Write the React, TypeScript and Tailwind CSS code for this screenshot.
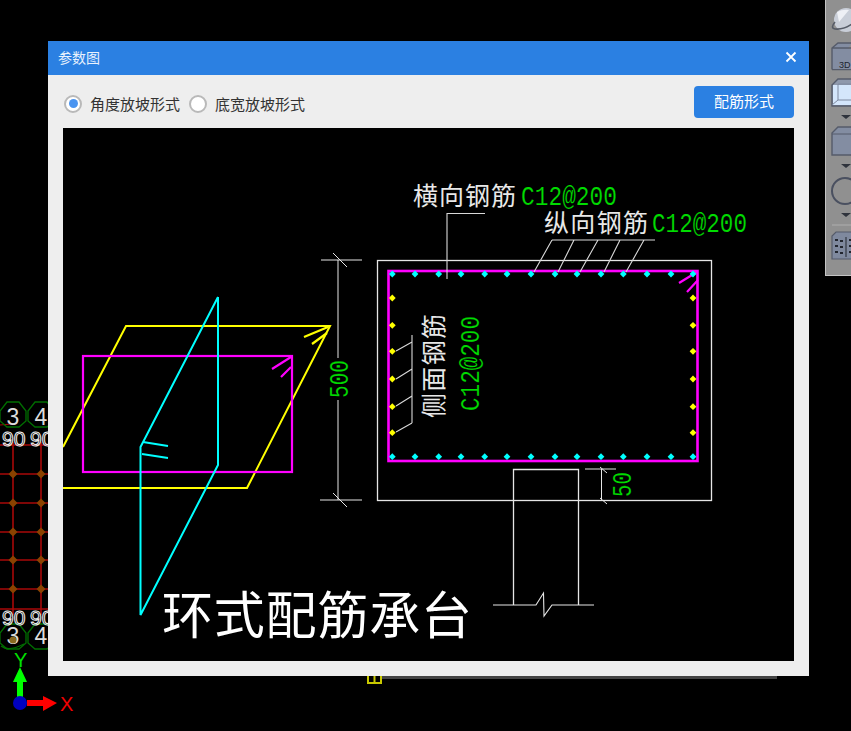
const cjk = "font-['Noto_Sans_CJK_SC','Noto_Sans',sans-serif]";
const mono = "font-['Liberation_Mono','DejaVu_Sans_Mono',monospace]";
const sans = "font-['Liberation_Sans',sans-serif]";

const dotX = [392.3, 415, 438.7, 461, 484.7, 507, 531, 555, 577, 601, 623.3, 647, 671, 693];
const dotY = [298, 325.3, 351.3, 379, 406.7, 432.7];

function Diamond({ x, y, color, r = 3.4 }: { x: number; y: number; color: string; r?: number }) {
  return <polygon points={`${x},${y - r} ${x + r},${y} ${x},${y + r} ${x - r},${y}`} fill={color} />;
}

// the thin green cad labels, squeezed into the width they have in the picture
function Green({ transform, x, y, length, children }: { transform?: string; x?: number; y?: number; length: number; children: string }) {
  return (
    <text
      transform={transform}
      x={x}
      y={y}
      fontSize="27"
      textLength={length}
      lengthAdjust="spacingAndGlyphs"
      fill="#00dc00"
      stroke="#000"
      strokeWidth="0.2"
      className={mono}
    >
      {children}
    </text>
  );
}

function Drawing() {
  return (
    <svg width={731} height={533} viewBox="63 128 731 533" className="block bg-black">
      {/* left: sloped 3d view */}
      <g fill="none" stroke="#ffff00" strokeWidth="2">
        <polyline points="63,447 126,326 330,326 247,488 63,488" />
        <path d="M328,327 L304,337 M327,333 L312,344" strokeWidth="2.2" />
      </g>
      <g fill="none" stroke="#ff00ff" strokeWidth="2.2">
        <rect x="83" y="356" width="209" height="116" />
        <path d="M291,357 L272,369 M291,367 L281,377" />
      </g>
      <g fill="none" stroke="#00ffff" strokeWidth="2">
        <polyline points="218,297 218,465 140.5,615 140.5,447 218,297" />
        <path d="M143,442 L168,446 M142,454 L168,458" strokeWidth="2" />
      </g>

      {/* dimension 500 */}
      <g fill="none" stroke="#e6e6e6" strokeWidth="1">
        <path d="M338,260 V358 M338,400 V500 M321,260 H362 M320,500 H362 M333,253 L347,267 M333,493 L347,507" />
      </g>
      <Green transform="translate(348,398) rotate(-90)" length={38}>500</Green>

      {/* section */}
      <rect x="377.5" y="260.5" width="334" height="240" fill="none" stroke="#e6e6e6" strokeWidth="1.3" />
      <rect x="388.5" y="271" width="309" height="190" fill="none" stroke="#ff00ff" strokeWidth="2.6" />
      <path d="M697,272 L679,283 M698,280 L687,292" stroke="#ff00ff" strokeWidth="2.2" fill="none" />
      {dotX.map((x) => <Diamond key={x} x={x} y={274} color="#00ffff" />)}
      {dotX.map((x) => <Diamond key={x} x={x} y={456.7} color="#00ffff" />)}
      {dotY.map((y) => <Diamond key={y} x={392.3} y={y} color="#ffff00" />)}
      {dotY.map((y) => <Diamond key={y} x={693} y={y} color="#ffff00" />)}

      {/* leaders */}
      <g fill="none" stroke="#d9d9d9" strokeWidth="1.1">
        <polyline points="485,213.5 447,213.5 447,279" />
        <path d="M552,240 H655 M552,240 L534,272 M574,240 L558,272 M598,240 L580,272 M620,240 L604,272 M644,240 L626,272" />
        <path d="M412,335 V423 M412,342 L396,351 M412,369 L396,379 M412,396 L396,406 M412,423 L396,432" />
      </g>

      {/* column + break line */}
      <g fill="none" stroke="#e6e6e6" strokeWidth="1.3">
        <polyline points="513.5,605 513.5,469.5 578.5,469.5 578.5,605" />
        <polyline points="493,605 536,605 543.5,593 544,616 552,605 594,605" strokeWidth="1.1" />
        <path d="M585,469 H616 M601.5,469 V500 M600,467 L607,473 M600,498 L607,504" strokeWidth="1" />
      </g>
      <Green transform="translate(631,497) rotate(-90)" length={25}>50</Green>

      <text x="413" y="205" fontSize="25" textLength="103" fill="#e8e8e8" className={cjk}>横向钢筋</text>
      <Green x={521} y={205} length={96}>C12@200</Green>
      <text x="544" y="232" fontSize="25" textLength="104" fill="#e8e8e8" className={cjk}>纵向钢筋</text>
      <Green x={652} y={232} length={95}>C12@200</Green>
      <text transform="translate(443,418) rotate(-90)" fontSize="25" textLength="104" fill="#e8e8e8" className={cjk}>侧面钢筋</text>
      <Green transform="translate(479,411) rotate(-90)" length={95}>C12@200</Green>
      <text x="162" y="634" fontSize="51" textLength="310" fill="#ffffff" className={cjk}>环式配筋承台</text>
    </svg>
  );
}

function Radio({ checked, label }: { checked?: boolean; label: string }) {
  return (
    <label className="flex items-center gap-[8px]">
      <span className="flex h-[18px] w-[18px] items-center justify-center rounded-full border-2 border-[#b9b9b9] bg-white">
        {checked && <span className="h-[9px] w-[9px] rounded-full bg-[#4a94f0]" />}
      </span>
      <span className="text-[15px] leading-none text-[#333333]">{label}</span>
    </label>
  );
}

// what is left of the cad window behind the dialog
function Backdrop() {
  const rows = [474, 503, 532, 560, 589];
  const cols = [13, 41];
  return (
    <svg width={851} height={731} className="absolute left-0 top-0">
      <g stroke="#a80808" strokeWidth="1.6">
        {cols.map((x) => <line key={x} x1={x} x2={x} y1={442} y2={615} />)}
        {rows.map((y) => <line key={y} x1={0} x2={48} y1={y} y2={y} />)}
        <line x1={0} x2={48} y1={445} y2={445} />
        <line x1={0} x2={48} y1={609} y2={609} />
        <line x1={0} x2={12} y1={425} y2={424} strokeWidth="1" />
      </g>
      {cols.map((x) => rows.map((y) => <Diamond key={`${x}-${y}`} x={x} y={y} r={4.5} color="#8a4200" />))}
      {cols.map((x, i) =>
        [
          { y: 416, base: 425 },
          { y: 638, base: 644 },
        ].map(({ y, base }) => (
          <g key={`${x}-${y}`}>
            <polygon
              points={`${x - 6},${y - 14} ${x + 6},${y - 14} ${x + 13},${y - 5} ${x + 13},${y + 5} ${x + 6},${y + 11} ${x - 6},${y + 11} ${x - 13},${y + 5} ${x - 13},${y - 5}`}
              fill="none"
              stroke="#006e00"
              strokeWidth="1.3"
            />
            <text x={x} y={base} textAnchor="middle" fontSize="23" fill="#dcdcdc" className={sans}>{i + 3}</text>
          </g>
        ))
      )}
      {[446, 625].map((y) =>
        [2, 30].map((x) => (
          <text key={`${x}-${y}`} x={x} y={y} fontSize="21" fill="none" stroke="#f0f0f0" strokeWidth="1" className={sans}>90</text>
        ))
      )}
      <path d="M1,646 Q8,652 24,644" stroke="#007000" fill="none" strokeWidth="1.2" />
      <circle cx="13" cy="640" r="3.5" fill="#8a6a20" />

      {/* axis */}
      <rect x="17" y="680" width="6" height="18" fill="#00ff00" />
      <polygon points="20,667 27,682 13,682" fill="#00ff00" />
      <rect x="27" y="700" width="18" height="6" fill="#ff0000" />
      <polygon points="57,703 43,696 43,711" fill="#ff0000" />
      <circle cx="20" cy="703" r="7" fill="#0000c0" />
      <text x="14" y="667" fontSize="20" fill="#00e000" className={sans}>Y</text>
      <text x="60" y="711" fontSize="20" fill="#f00000" className={sans}>X</text>

      {/* bottom scrap under the dialog */}
      <path d="M368,676 V683 H381 V676 M374.5,676 V682" fill="none" stroke="#c8c800" strokeWidth="2" />
      <rect x="382" y="676" width="395" height="3" fill="#444444" />
    </svg>
  );
}

function Toolbar() {
  return (
    <div className="absolute left-[825px] top-0 h-[276px] w-[26px] border-l border-b border-[#c4c4c4] bg-[#909090]">
      <svg width={26} height={275} viewBox="825 0 26 275" className="block">
        <circle cx="845" cy="20" r="12" fill="#c9ced8" />
        <path d="M836,12 Q842,9 848,10 Q843,16 838,22 Z" fill="#eef0f5" />
        <path d="M834,22 Q829,28 834,29 Q842,30 851,24" fill="none" stroke="#565b66" strokeWidth="1.6" />
        <path d="M831,69.5 V48 L837,43 H851 M831,69.5 H851 M831,48 H851" fill="#838da2" stroke="#555b6a" strokeWidth="1.4" />
        <rect x="832" y="49" width="19" height="20" fill="#838da2" />
        <text x="838" y="68" fontSize="9" fill="#20242e" className={sans}>3D</text>
        <path d="M831,106 V85 L837,79 H851 V106 Z" fill="#8f99ac" stroke="#555b6a" strokeWidth="1.4" />
        <rect x="832" y="85" width="19" height="20" fill="#d4e6fb" />
        <path d="M837,84 H851 V100 H837 Z M831,105 L837,100" stroke="#7e8aa0" fill="none" />
        <polygon points="840,115 850,115 845,119" fill="#2f333c" />
        <path d="M831,155 V133 L837,127 H851 V155 Z" fill="#838da2" stroke="#555b6a" strokeWidth="1.4" />
        <path d="M831,134 H851" stroke="#555b6a" />
        <polygon points="840,164 850,164 845,168" fill="#2f333c" />
        <circle cx="844" cy="191" r="13" fill="none" stroke="#4a5060" strokeWidth="2" />
        <polygon points="840,213 850,213 845,217" fill="#2f333c" />
        <line x1="831" x2="851" y1="225" y2="225" stroke="#aaaaaa" strokeWidth="1.2" />
        <path d="M831,259 V236 L835,232 H851 V259 Z" fill="#7f899e" stroke="#555b6a" strokeWidth="1.2" />
        <path d="M834,240 h3 M834,246 h3 M834,252 h3 M839,241 h3 M839,247 h3 M839,253 h3 M848,240 h3 M848,246 h3 M848,252 h3" stroke="#22262f" strokeWidth="2" />
        <line x1="845" x2="845" y1="237" y2="257" stroke="#22262f" />
      </svg>
    </div>
  );
}

export default function App() {
  return (
    <div className={`relative h-[731px] w-[851px] overflow-hidden bg-black pl-[48px] pt-[41px] ${cjk}`}>
      <Backdrop />
      <Toolbar />
      <div className="relative w-[761px] bg-[#eeeeee]">
        <div className="flex h-[34px] items-center justify-between bg-[#2b80e2] pb-[2px] pl-[10px] pr-[12px] text-[14px] text-[#e9f2fd]">
          <span>参数图</span>
          <svg width="12" height="12" viewBox="0 0 12 12">
            <path d="M1.5,1.5 L10.5,10.5 M10.5,1.5 L1.5,10.5" stroke="#fff" strokeWidth="1.8" />
          </svg>
        </div>
        <div className="px-[15px] pb-[15px]">
          <div className="flex h-[53px] items-center justify-between">
            <div className="flex items-center gap-[9px] pl-[1px] pt-[4px]">
              <Radio checked label="角度放坡形式" />
              <Radio label="底宽放坡形式" />
            </div>
            <button className="h-[32px] w-[100px] rounded-[4px] bg-[#2b80e2] text-[15px] text-white">配筋形式</button>
          </div>
          <Drawing />
        </div>
      </div>
    </div>
  );
}
